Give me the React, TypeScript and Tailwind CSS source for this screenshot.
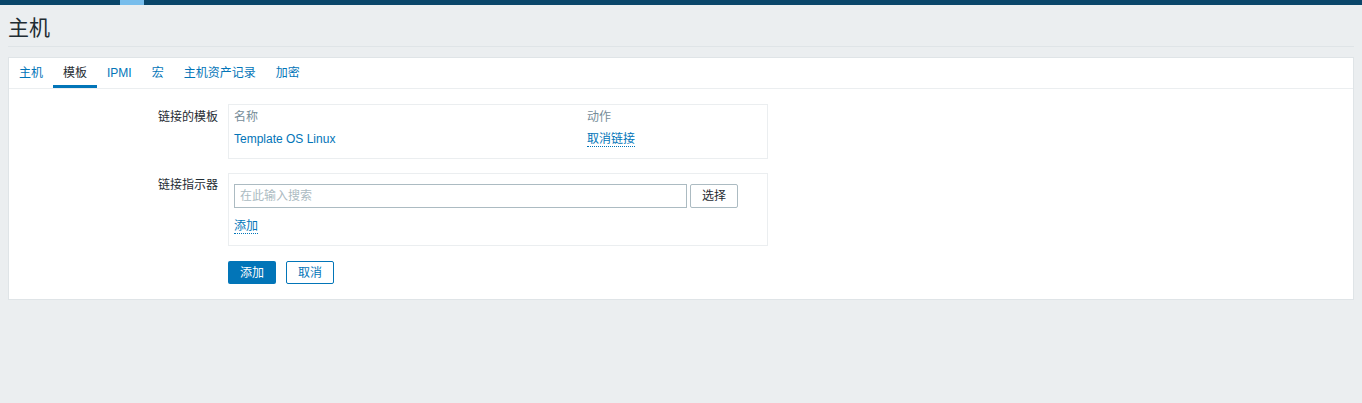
import React from "react";

const font = { fontFamily: '"Liberation Sans", Arial, "Noto Sans CJK SC", sans-serif' };

export default function App() {
  const tabs = ["主机", "模板", "IPMI", "宏", "主机资产记录", "加密"];
  return (
    <div className="w-[1362px] h-[403px] bg-[#ebeef0] text-[12px] text-[#1f2c33] overflow-hidden" style={font}>
      <div className="h-[5px] bg-[#0a466a] flex">
        <div className="ml-[120px] w-[24px] h-full bg-[#78bdec]" />
      </div>
      <div className="px-2">
        <div className="pt-[11px] pb-[6px] border-b border-[#dfe4e7]">
          <h1 className="text-[21px] leading-[24px] font-normal">主机</h1>
        </div>
        <div className="mt-[10px] bg-white border border-[#dfe4e7] h-[243px]">
          <div className="flex border-b border-[#ebeef0] h-[31px]">
            {tabs.map((t, i) => (
              <div
                key={t}
                className={
                  "px-[10px] h-[30px] flex items-center leading-[14px] " +
                  (i === 1 ? "text-[#1f2c33] border-b-[3px] border-[#0275b8] pt-[3px]" : "text-[#0275b8]")
                }
              >
                {t}
              </div>
            ))}
          </div>
          <div className="pt-[15px] pb-[15px]">
            <div className="flex">
              <div className="w-[209px] text-right pt-[6px] leading-[14px]">链接的模板</div>
              <div className="ml-[10px] w-[540px] border border-[#ebeef0] px-[5px] pt-[5px] pb-[11px] leading-[14px]">
                <div className="flex text-[#768d99]">
                  <div className="w-[353px]">名称</div>
                  <div>动作</div>
                </div>
                <div className="flex mt-[8px]">
                  <div className="w-[353px] text-[#0275b8]">Template OS Linux</div>
                  <div className="text-[#0275b8] border-b border-dotted border-[#0275b8]">取消链接</div>
                </div>
              </div>
            </div>
            <div className="flex mt-[14px]">
              <div className="w-[209px] text-right pt-[5px] leading-[14px]">链接指示器</div>
              <div className="ml-[10px] w-[540px] border border-[#ebeef0] px-[5px] pt-[10px] pb-[11px] leading-[14px]">
                <div className="flex gap-[3px]">
                  <div className="w-[453px] h-[24px] border border-[#acbbc2] flex items-center px-[5px] text-[#acbbc2]">
                    在此输入搜索
                  </div>
                  <div className="w-[48px] h-[24px] border border-[#acbbc2] rounded-[2px] flex items-center justify-center text-[#1f2c33]">
                    选择
                  </div>
                </div>
                <div className="mt-[11px] flex">
                  <span className="text-[#0275b8] border-b border-dotted border-[#0275b8]">添加</span>
                </div>
              </div>
            </div>
            <div className="flex mt-[15px] ml-[219px] gap-[10px]">
              <div className="w-[48px] h-[23px] bg-[#0275b8] text-white rounded-[2px] flex items-center justify-center">添加</div>
              <div className="w-[48px] h-[23px] border border-[#0275b8] text-[#0275b8] rounded-[2px] flex items-center justify-center">取消</div>
            </div>
          </div>
        </div>
      </div>
    </div>
  );
}
